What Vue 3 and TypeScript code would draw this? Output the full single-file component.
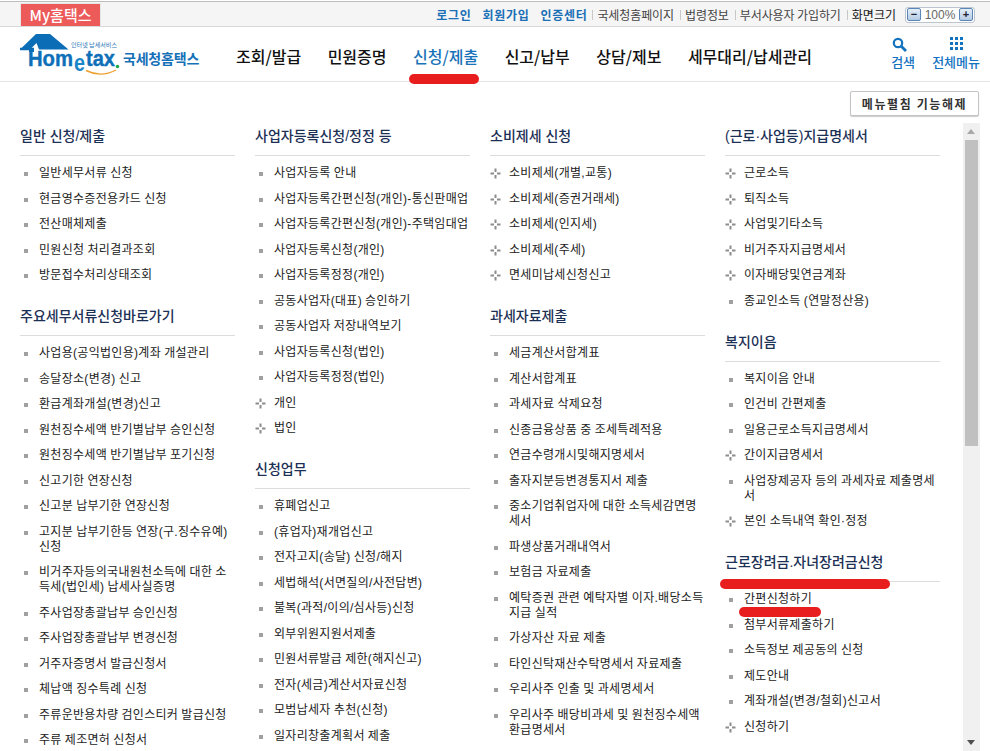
<script setup lang="ts">
interface Item { t: string; plus?: boolean; mark?: boolean }
interface Section { title: string; mark?: boolean; items: Item[] }

const L = (...a: string[]): Item[] => a.map((t) => ({ t }));
const P = (...a: string[]): Item[] => a.map((t) => ({ t, plus: true }));

const columns: Section[][] = [
  [
    { title: '일반 신청/제출', items: L('일반세무서류 신청', '현금영수증전용카드 신청', '전산매체제출', '민원신청 처리결과조회', '방문접수처리상태조회') },
    { title: '주요세무서류신청바로가기', items: L('사업용(공익법인용)계좌 개설관리', '송달장소(변경) 신고', '환급계좌개설(변경)신고', '원천징수세액 반기별납부 승인신청', '원천징수세액 반기별납부 포기신청', '신고기한 연장신청', '신고분 납부기한 연장신청', '고지분 납부기한등 연장(구.징수유예) 신청', '비거주자등의국내원천소득에 대한 소득세(법인세) 납세사실증명', '주사업장총괄납부 승인신청', '주사업장총괄납부 변경신청', '거주자증명서 발급신청서', '체납액 징수특례 신청', '주류운반용차량 검인스티커 발급신청', '주류 제조면허 신청서') },
  ],
  [
    { title: '사업자등록신청/정정 등', items: [...L('사업자등록 안내', '사업자등록간편신청(개인)-통신판매업', '사업자등록간편신청(개인)-주택임대업', '사업자등록신청(개인)', '사업자등록정정(개인)', '공동사업자(대표) 승인하기', '공동사업자 저장내역보기', '사업자등록신청(법인)', '사업자등록정정(법인)'), ...P('개인', '법인')] },
    { title: '신청업무', items: L('휴폐업신고', '(휴업자)재개업신고', '전자고지(송달) 신청/해지', '세법해석(서면질의/사전답변)', '불복(과적/이의/심사등)신청', '외부위원지원서제출', '민원서류발급 제한(해지신고)', '전자(세금)계산서자료신청', '모범납세자 추천(신청)', '일자리창출계획서 제출') },
  ],
  [
    { title: '소비제세 신청', items: [...P('소비제세(개별,교통)', '소비제세(증권거래세)', '소비제세(인지세)', '소비제세(주세)', '면세미납세신청신고')] },
    { title: '과세자료제출', items: L('세금계산서합계표', '계산서합계표', '과세자료 삭제요청', '신종금융상품 중 조세특례적용', '연금수령개시및해지명세서', '출자지분등변경통지서 제출', '중소기업취업자에 대한 소득세감면명세서', '파생상품거래내역서', '보험금 자료제출', '예탁증권 관련 예탁자별 이자.배당소득 지급 실적', '가상자산 자료 제출', '타인신탁재산수탁명세서 자료제출', '우리사주 인출 및 과세명세서', '우리사주 배당비과세 및 원천징수세액 환급명세서') },
  ],
  [
    { title: '(근로·사업등)지급명세서', items: [...P('근로소득', '퇴직소득', '사업및기타소득', '비거주자지급명세서', '이자배당및연금계좌'), ...L('종교인소득 (연말정산용)')] },
    { title: '복지이음', items: [...L('복지이음 안내', '인건비 간편제출', '일용근로소득지급명세서'), ...P('간이지급명세서'), ...L('사업장제공자 등의 과세자료 제출명세서'), ...P('본인 소득내역 확인·정정')] },
    { title: '근로장려금.자녀장려금신청', mark: true, items: [{ t: '간편신청하기', mark: true }, ...L('첨부서류제출하기', '소득정보 제공동의 신청', '제도안내', '계좌개설(변경/철회)신고서'), ...P('신청하기')] },
  ],
];

const nav = ['조회/발급', '민원증명', '신청/제출', '신고/납부', '상담/제보', '세무대리/납세관리'];
const gridDots = Array.from({ length: 9 }, (_, i) => i);
</script>

<template>
  <div class="page">
    <div class="topbar">
      <div class="my">My홈택스</div>
      <div class="toplinks">
        <a class="strong">로그인</a>
        <a class="strong">회원가입</a>
        <a class="strong">인증센터</a>
        <i class="sep"></i><a>국세청홈페이지</a>
        <i class="sep"></i><a>법령정보</a>
        <i class="sep"></i><a>부서사용자 가입하기</a>
        <i class="sep"></i><a class="dark">화면크기</a>
        <div class="zoomer">
          <span class="zbtn">−</span>
          <span class="zval">100%</span>
          <span class="zbtn">+</span>
        </div>
      </div>
    </div>

    <header class="header">
      <div class="logo">
        <svg width="104" height="46" viewBox="20 33 104 46" class="logo-svg">
          <path fill-rule="evenodd" d="M20 49.6 L36 34 L50 34 L68.5 49.6 L39 49.6 L36.5 43 L30 49.6 Z" fill="#0b6db5" />
          <path d="M20 47.8 H34 V52 H29 V50.2 H20 Z" fill="#0b6db5" />
          <text x="71" y="47" class="logo-tiny" textLength="46" lengthAdjust="spacingAndGlyphs">인터넷 납세서비스</text>
          <text x="28" y="66" class="logo-big" textLength="45" lengthAdjust="spacingAndGlyphs">Hom</text>
          <text x="74" y="71" class="logo-e" textLength="11" lengthAdjust="spacingAndGlyphs">e</text>
          <text x="86" y="66" class="logo-big" textLength="29" lengthAdjust="spacingAndGlyphs">tax</text>
          <circle cx="117.5" cy="66.5" r="1.7" fill="#16a84a" />
          <path d="M86 70.5 Q101 78 116 70" fill="none" stroke="#f0a030" stroke-width="1.4" />
        </svg>
        <span class="logo-name">국세청홈택스</span>
      </div>
      <nav class="nav">
        <a v-for="n in nav" :key="n" :class="{ active: n === '신청/제출' }">{{ n }}</a>
      </nav>
      <div class="tools">
        <div class="tool search">
          <svg width="15" height="15" viewBox="0 0 15 15">
            <circle cx="6" cy="6" r="4.2" fill="none" stroke="#1473bf" stroke-width="2.2" />
            <path d="M9 9 L14 14" stroke="#1473bf" stroke-width="2.8" />
          </svg>
          <span>검색</span>
        </div>
        <div class="tool">
          <div class="grid"><b v-for="d in gridDots" :key="d"></b></div>
          <span>전체메뉴</span>
        </div>
      </div>
    </header>

    <div class="actions"><button class="fold">메뉴펼침 기능해제</button></div>

    <div class="body">
      <div class="cols">
        <div v-for="(col, ci) in columns" :key="ci" class="col">
          <section v-for="s in col" :key="s.title" class="section">
            <h3 :class="{ marked: s.mark }">{{ s.title }}</h3>
            <ul>
              <li v-for="it in s.items" :key="it.t" :class="{ marked: it.mark }">
                <svg v-if="it.plus" class="plus" width="11" height="11" viewBox="0 0 11 11">
                  <path d="M4.5 0.5h2v3.5h-2zM4.5 7h2v3.5h-2zM0.5 4.5H4v2H0.5zM7 4.5h3.5v2H7z" fill="#8c8c8c" />
                </svg>
                <i v-else class="dot"></i>
                <span>{{ it.t }}</span>
              </li>
            </ul>
          </section>
        </div>
      </div>
      <div class="scrollbar">
        <div class="arrow up"></div>
        <div class="thumb"></div>
        <div class="track"></div>
        <div class="arrow down"></div>
      </div>
    </div>
  </div>
</template>

<style>
html, body { margin: 0; background: #fff; overflow: hidden; }
</style>

<style scoped>
.page {
  width: 990px;
  height: 751px;
  overflow: hidden;
  display: flex;
  flex-direction: column;
  font-family: "Noto Sans CJK KR", "Liberation Sans", sans-serif;
  color: #222;
  background: #fff;
}
a { text-decoration: none; }

.topbar {
  height: 26px;
  box-sizing: border-box;
  flex: none;
  margin-top: 1px;
  border-top: 1px solid #bdbdbd;
  border-bottom: 1px solid #d8d8d8;
  background: #f5f5f5;
  display: flex;
  align-items: flex-end;
  padding: 0 15px 0 20px;
}
.my {
  width: 81px;
  height: 23px;
  box-sizing: border-box;
  border: 1px solid #e6e6e6;
  border-bottom: 0;
  background: #ec5a5a;
  color: #fff;
  font-size: 15px;
  font-weight: 500;
  text-align: center;
  line-height: 22px;
}
.toplinks {
  margin-left: auto;
  margin-top: 1px;
  align-self: center;
  display: flex;
  align-items: center;
  font-size: 12px;
  line-height: 16px;
  color: #444;
}
.toplinks a { margin-right: 6px; white-space: nowrap; letter-spacing: -0.1px; }
.toplinks a.strong { color: #1a6fb5; font-weight: 700; letter-spacing: 0.7px; margin-right: 11px; }
.toplinks a.strong:nth-child(3) { margin-right: 5px; }
.toplinks a.dark { color: #111; margin-right: 9px; letter-spacing: 0; }
.sep { width: 1px; height: 10px; background: #c8c8c8; margin-right: 4px; }
.zoomer {
  width: 70px;
  height: 16px;
  box-sizing: border-box;
  border: 1px solid #bcc4ce;
  border-radius: 3px;
  background: #fff;
  display: flex;
  align-items: center;
  justify-content: space-between;
  padding: 0 1px;
}
.zbtn {
  width: 14px;
  height: 13px;
  box-sizing: border-box;
  border: 1px solid #5a86b8;
  border-radius: 2px;
  background: linear-gradient(#e4eef8, #b4cbe4);
  color: #223;
  font: 700 11px/11px "Liberation Sans", sans-serif;
  text-align: center;
}
.zval { font: 12px/14px "Liberation Sans", sans-serif; color: #666; }

.header {
  height: 55px;
  flex: none;
  box-sizing: border-box;
  border-bottom: 1px solid #e4e4e4;
  display: flex;
  align-items: flex-start;
  padding-left: 20px;
}
.logo { width: 180px; height: 54px; position: relative; flex: none; display: flex; }
.logo-svg { display: block; margin-top: 6px; flex: none; }
.logo-tiny { font-size: 6px; fill: #2c78b8; font-family: "Noto Sans CJK KR", sans-serif; }
.logo-big { font: 700 22px "Liberation Sans", sans-serif; fill: #0e70b8; stroke: #0e70b8; stroke-width: 0.4; }
.logo-e { font: 700 23px "Liberation Sans", sans-serif; fill: #1a86c8; }
.logo-name {
  margin-top: 21px;
  margin-left: -1px;
  font-size: 14px;
  line-height: 20px;
  font-weight: 700;
  letter-spacing: -0.2px;
  color: #1570b8;
  white-space: nowrap;
}
.nav {
  margin-left: 36px;
  display: flex;
  gap: 26.5px;
  padding-top: 17px;
  font-size: 16px;
  line-height: 24px;
  font-weight: 500;
}
.nav a { color: #111; white-space: nowrap; position: relative; }
.nav a.active { color: #1a73b8; }
.nav a.active::after {
  content: "";
  position: absolute;
  left: -4px;
  top: 30px;
  width: 70px;
  height: 10px;
  border-radius: 5px;
  background: #e81e1e;
}
.tools {
  margin-left: auto;
  display: flex;
  gap: 15px;
  padding-top: 10px;
  padding-right: 10px;
}
.tool {
  display: flex;
  flex-direction: column;
  align-items: center;
  font-size: 13px;
  line-height: 18px;
  font-weight: 500;
  color: #1473bf;
  white-space: nowrap;
}
.tool > span { margin-top: 1px; }
.tool.search { align-items: flex-start; width: 26px; }
.tool.search svg { margin-left: 1px; }
.grid {
  width: 13px;
  height: 13px;
  display: grid;
  grid-template-columns: repeat(3, 3px);
  grid-auto-rows: 3px;
  gap: 2px;
  margin-bottom: 2px;
}
.grid b { background: #1473bf; }

.actions {
  flex: none;
  height: 41px;
  display: flex;
  justify-content: flex-end;
  align-items: flex-start;
  padding: 9px 11px 0 0;
  box-sizing: border-box;
}
.fold {
  width: 129px;
  height: 25px;
  box-sizing: border-box;
  border: 1px solid #c4c4c4;
  border-radius: 2px;
  box-shadow: 0 1px 1px #ccc;
  background: #fff;
  font-family: inherit;
  font-size: 12px;
  font-weight: 700;
  letter-spacing: 1.6px;
  color: #333;
  padding: 0;
}

.body { flex: 1; display: flex; min-height: 0; padding-right: 10px; }
.cols {
  flex: 1;
  display: grid;
  grid-template-columns: repeat(4, 215px);
  gap: 20px;
  padding: 3px 0 0 20px;
  align-items: start;
  overflow: hidden;
}
.section + .section { margin-top: 17.5px; }
h3 {
  position: relative;
  margin: 0;
  height: 30px;
  box-sizing: border-box;
  border-bottom: 1px solid #dcdcdc;
  font-family: "Liberation Sans", "Noto Sans CJK KR", sans-serif;
  font-size: 14px;
  line-height: 20px;
  font-weight: 500;
  color: #1c3055;
  white-space: nowrap;
}
h3.marked::after {
  content: "";
  position: absolute;
  left: -5px;
  top: 27px;
  width: 170px;
  height: 10px;
  border-radius: 5px;
  background: #e81e1e;
}
ul { list-style: none; margin: 5px 0 0; padding: 0; }
li {
  position: relative;
  padding: 5.25px 0 5.25px 19px;
  font-family: "Liberation Sans", "Noto Sans CJK KR", sans-serif;
  font-size: 12px;
  line-height: 15px;
  letter-spacing: 0.3px;
  word-spacing: -0.5px;
  color: #222;
  word-break: break-all;
}
li.marked::after {
  content: "";
  position: absolute;
  left: 14px;
  top: 20px;
  width: 82px;
  height: 10px;
  border-radius: 5px;
  background: #e81e1e;
}
.dot {
  position: absolute;
  left: 4px;
  top: 11px;
  width: 4px;
  height: 4px;
  background: #a0a0a0;
}
.plus { position: absolute; left: 0; top: 7px; }

.scrollbar {
  flex: none;
  width: 17px;
  background: #f0f0f0;
  display: flex;
  flex-direction: column;
  align-items: center;
  margin-right: 0;
}
.arrow { flex: none; height: 17px; position: relative; width: 17px; }
.arrow::after {
  content: "";
  position: absolute;
  left: 4px;
  width: 0;
  height: 0;
  border-left: 4px solid transparent;
  border-right: 4px solid transparent;
}
.arrow.up::after { top: 6px; border-bottom: 5px solid #a8a8a8; }
.arrow.down::after { bottom: 6px; border-top: 5px solid #505050; }
.thumb { flex: none; width: 13px; height: 306px; background: #c0c0c0; }
.track { flex: 1; }
</style>
